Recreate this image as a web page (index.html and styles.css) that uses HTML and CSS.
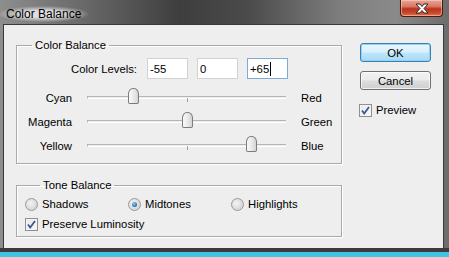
FILE: index.html
```html
<!DOCTYPE html>
<html lang="en">

<head>
    <meta charset="UTF-8">
    <title>Color Balance</title>
    <link rel="stylesheet" href="styles.css">
</head>

<body>
    <div class="window">
        <div class="titlebar">
            <span class="title">Color Balance</span>
            <div class="close">
                <svg width="16" height="11" viewBox="0 0 16 11">
                    <path d="M2 1h4l2 2.5L10 1h4l-4 4.5 4 4.5h-4L8 7.5 6 10H2l4-4.5z" fill="#fff" stroke="#3a2420" stroke-width="1"/>
                </svg>
            </div>
        </div>

        <div class="client">
            <div class="left">
                <fieldset class="group levels">
                    <legend>Color Balance</legend>

                    <div class="level-row">
                        <label class="level-label">Color Levels:</label>
                        <div class="field">-55</div>
                        <div class="field">0</div>
                        <div class="field focused">+65<span class="caret"></span></div>
                    </div>

                    <div class="slider-row">
                        <span class="from">Cyan</span>
                        <div class="track"><span class="tick"></span><span class="thumb" style="left: 22.5%"></span></div>
                        <span class="to">Red</span>
                    </div>
                    <div class="slider-row">
                        <span class="from">Magenta</span>
                        <div class="track"><span class="tick"></span><span class="thumb" style="left: 50%"></span></div>
                        <span class="to">Green</span>
                    </div>
                    <div class="slider-row">
                        <span class="from">Yellow</span>
                        <div class="track"><span class="tick"></span><span class="thumb" style="left: 82.5%"></span></div>
                        <span class="to">Blue</span>
                    </div>
                </fieldset>

                <fieldset class="group tones">
                    <legend>Tone Balance</legend>
                    <div class="radio-row">
                        <div class="option"><span class="radio"></span>Shadows</div>
                        <div class="option"><span class="radio checked"></span>Midtones</div>
                        <div class="option"><span class="radio"></span>Highlights</div>
                    </div>
                    <div class="check-row">
                        <span class="check">
                            <svg width="9" height="9" viewBox="0 0 9 9"><path d="M1 4.5l2.2 3L8 1" fill="none" stroke="#3d569a" stroke-width="1.8"/></svg>
                        </span>Preserve Luminosity
                    </div>
                </fieldset>
            </div>

            <div class="right">
                <button class="btn default">OK</button>
                <button class="btn">Cancel</button>
                <div class="preview">
                    <span class="check">
                        <svg width="9" height="9" viewBox="0 0 9 9"><path d="M1 4.5l2.2 3L8 1" fill="none" stroke="#3d569a" stroke-width="1.8"/></svg>
                    </span>Preview
                </div>
            </div>
        </div>
        <div class="frame-bottom"></div>
    </div>
</body>

</html>
```

FILE: styles.css
```css
body {
    margin: 0;
    font-family: "Liberation Sans", Arial, sans-serif;
    font-size: 11.3px;
    color: #000;
}

.window {
    width: 449px;
    height: 257px;
    background: linear-gradient(90deg, #8e8e8e 0%, #6a6a6a 18%, #3e3e3e 40%, #4a4a4a 55%, #7c7c7c 75%, #8a8a8a 88%, #6c6c6c 100%);
    display: flex;
    flex-direction: column;
}

.titlebar {
    height: 25px;
    display: flex;
    justify-content: space-between;
    align-items: flex-start;
    padding: 0 6px 0 6px;
}

.title {
    font-size: 12px;
    margin-top: 6px;
    color: #000;
    background: radial-gradient(ellipse at center, rgba(255, 255, 255, 0.75) 30%, rgba(255, 255, 255, 0) 72%);
    padding: 1px 8px;
    margin-left: -8px;
}

.close {
    width: 41px;
    height: 16px;
    border: 1px solid #4c1a12;
    border-top: none;
    border-radius: 0 0 4px 4px;
    background: linear-gradient(#e9a595 0%, #d77a66 40%, #b8331c 55%, #c8472c 80%, #e0724f 100%);
    box-shadow: inset 0 0 0 1px rgba(255, 220, 210, 0.5);
    display: flex;
    align-items: center;
    justify-content: center;
}

.client {
    height: 223px;
    margin: 0 6px 0 4px;
    background: #eeeeee;
    box-sizing: border-box;
    padding: 13px 12px 0 12px;
    display: flex;
    box-shadow: 0 0 0 1px #3a3a3a;
}

.frame-bottom {
    height: 4px;
    background: #3b3b3b;
    border-bottom: 5px solid #3fc4e4;
}

.left {
    width: 326px;
}

.group {
    margin: 0;
    border: 1px solid #a9a9a9;
    box-shadow: 1px 1px 0 #fff, inset 1px 1px 0 #fff;
    padding: 0;
}

.group legend {
    padding: 0 3px;
    margin-left: 15px;
    line-height: 14px;
}

.levels {
    padding: 6px 0 5px 0;
}

.level-row {
    display: flex;
    align-items: center;
    height: 21px;
    gap: 9px;
    margin-bottom: 7px;
}

.level-label {
    width: 120px;
    text-align: right;
    margin-right: 1px;
}

.field {
    width: 37px;
    height: 19px;
    border: 1px solid #cfd3d8;
    background: #fff;
    padding-left: 2px;
    display: flex;
    align-items: center;
}

.field.focused {
    border-color: #80a9d8;
}

.caret {
    width: 1px;
    height: 14px;
    background: #000;
    margin-left: 1px;
}

.slider-row {
    display: grid;
    grid-template-columns: 55px 199px auto;
    column-gap: 15px;
    align-items: center;
    height: 24px;
}

.from {
    text-align: right;
}

.track {
    position: relative;
    height: 1px;
    border-top: 1px solid #b4b4b4;
    border-bottom: 1px solid #fff;
    border-left: 1px solid #b4b4b4;
    margin-top: -2px;
}

.tick {
    position: absolute;
    left: 50%;
    top: 1px;
    width: 1px;
    height: 4px;
    background: #a0a0a0;
}

.thumb {
    position: absolute;
    top: -9px;
    width: 9px;
    height: 14px;
    margin-left: -5px;
    border: 1px solid #7b7b7b;
    border-radius: 5px 5px 2px 2px / 6px 6px 2px 2px;
    background: linear-gradient(90deg, #fafafa, #e6e6e6 60%, #d4d4d4);
}

.tones {
    margin-top: 14px;
    padding: 2px 0 2px 8px;
}

.radio-row {
    display: flex;
    height: 20px;
    align-items: center;
}

.option {
    width: 103px;
    display: flex;
    align-items: center;
}

.radio {
    width: 11px;
    height: 11px;
    border: 1px solid #9a9a9a;
    border-radius: 50%;
    background: radial-gradient(circle at 40% 40%, #f4f4f4, #d6d6d6 70%, #c4c4c4);
    margin-right: 4px;
    display: flex;
    align-items: center;
    justify-content: center;
}

.radio.checked::after {
    content: "";
    width: 5px;
    height: 5px;
    border-radius: 50%;
    background: radial-gradient(circle at 40% 35%, #8fd0f3, #1d6fae 70%);
}

.check-row,
.preview {
    display: flex;
    align-items: center;
    height: 20px;
}

.check {
    width: 11px;
    height: 11px;
    border: 1px solid #8f8f8f;
    background: linear-gradient(135deg, #e8e8e8, #fafafa);
    box-shadow: inset 0 0 0 1px #f4f4f4;
    margin-right: 4px;
    display: flex;
    align-items: center;
    justify-content: center;
}

.right {
    width: 71px;
    margin-left: 18px;
    padding-top: 5px;
    display: flex;
    flex-direction: column;
}

.btn {
    height: 19px;
    font: inherit;
    border: 1px solid #707070;
    border-radius: 3px;
    background: linear-gradient(#f2f2f2 0%, #ebebeb 48%, #dddddd 52%, #cfcfcf 100%);
    box-shadow: inset 0 0 0 1px rgba(255, 255, 255, 0.7);
    padding: 0;
    margin-bottom: 9px;
}

.btn.default {
    border-color: #3c7fb1;
    background: linear-gradient(#eaf6fd 0%, #d9f0fc 48%, #bee6fd 52%, #a7d9f5 100%);
    box-shadow: inset 0 0 0 1px #8fd3f7;
}

.preview {
    margin-top: 1px;
    margin-left: -1px;
}
```
